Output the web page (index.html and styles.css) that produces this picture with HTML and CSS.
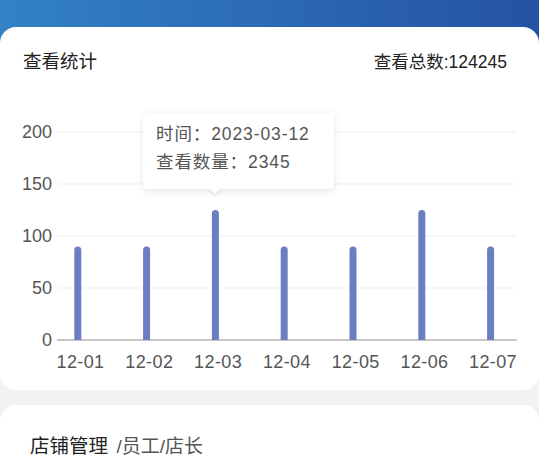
FILE: index.html
```html
<!DOCTYPE html>
<html lang="zh-CN">
<head>
  <meta charset="UTF-8">
  <title>查看统计</title>
  <meta name="viewport" content="width=device-width, initial-scale=1.0">
  <link rel="stylesheet" href="styles.css">
</head>
<body>

  <div class="page">

    <!-- 查看统计 -->
    <section class="card stats-card">
      <div class="card-head">
        <h2 class="card-title">查看统计</h2>
        <div class="total">查看总数:124245</div>
      </div>

      <svg class="chart" width="539" height="317" viewBox="0 0 539 317">
        <g class="grid">
          <line x1="58" y1="59" x2="517" y2="59"></line>
          <line x1="58" y1="111" x2="517" y2="111"></line>
          <line x1="58" y1="163" x2="517" y2="163"></line>
          <line x1="58" y1="215" x2="517" y2="215"></line>
        </g>
        <line class="axis" x1="57" y1="267" x2="517" y2="267"></line>

        <g class="y-labels">
          <text x="52" y="59" dy="0.36em">200</text>
          <text x="52" y="111" dy="0.36em">150</text>
          <text x="52" y="163" dy="0.36em">100</text>
          <text x="52" y="215" dy="0.36em">50</text>
          <text x="52" y="267" dy="0.36em">0</text>
        </g>

        <g class="bars">
          <path d="M74.3 267 V176.9 A3.5 3.5 0 0 1 81.3 176.9 V267 Z"></path>
          <path d="M143.1 267 V176.9 A3.5 3.5 0 0 1 150.1 176.9 V267 Z"></path>
          <path d="M211.9 267 V140.5 A3.5 3.5 0 0 1 218.9 140.5 V267 Z"></path>
          <path d="M280.7 267 V176.9 A3.5 3.5 0 0 1 287.7 176.9 V267 Z"></path>
          <path d="M349.5 267 V176.9 A3.5 3.5 0 0 1 356.5 176.9 V267 Z"></path>
          <path d="M418.3 267 V140.5 A3.5 3.5 0 0 1 425.3 140.5 V267 Z"></path>
          <path d="M487.1 267 V176.9 A3.5 3.5 0 0 1 494.1 176.9 V267 Z"></path>
        </g>

        <g class="x-labels">
          <text x="80.5" y="289" dy="0.36em">12-01</text>
          <text x="149.3" y="289" dy="0.36em">12-02</text>
          <text x="218.1" y="289" dy="0.36em">12-03</text>
          <text x="286.9" y="289" dy="0.36em">12-04</text>
          <text x="355.7" y="289" dy="0.36em">12-05</text>
          <text x="424.5" y="289" dy="0.36em">12-06</text>
          <text x="493" y="289" dy="0.36em">12-07</text>
        </g>
      </svg>

      <!-- tooltip over the 12-03 bar -->
      <div class="tooltip">
        <p>时间：2023-03-12</p>
        <p>查看数量：2345</p>
      </div>
    </section>

    <!-- 店铺管理 -->
    <section class="card shop-card">
      <h2 class="shop-title">店铺管理 <span>/员工/店长</span></h2>
    </section>

  </div>

</body>
</html>
```

FILE: styles.css
```css
* {
  box-sizing: border-box;
  margin: 0;
  padding: 0;
}

body {
  font-family: "Liberation Sans", "Noto Sans CJK SC", sans-serif;
  background: #f2f2f2;
  color: #222;
}

.page {
  background: linear-gradient(90deg, #3282c5, #2552a4) no-repeat;
  background-size: 100% 60px;
  padding-top: 27px;
}

.card {
  background: #fff;
  border-radius: 16px;
}

.stats-card {
  position: relative;
  height: 363px;
}

.card-head {
  display: flex;
  justify-content: space-between;
  align-items: center;
  padding: 24px 32px 0 23px;
  height: 46px;
}

.card-title {
  font-size: 18.5px;
  font-weight: normal;
  line-height: 22px;
  color: #222;
}

.total {
  font-size: 17.5px;
  line-height: 22px;
  color: #222;
}

.chart {
  display: block;
}

.grid line {
  stroke: #efefef;
  stroke-width: 1;
}

.axis {
  stroke: #8e8e8e;
  stroke-width: 1;
}

.y-labels text {
  font-size: 18px;
  fill: #555;
  text-anchor: end;
}

.x-labels text {
  font-size: 18px;
  letter-spacing: 0.4px;
  fill: #555;
  text-anchor: middle;
}

.bars path {
  fill: #6a7ec1;
}

.tooltip {
  position: absolute;
  left: 143px;
  top: 86px;
  width: 191px;
  height: 76px;
  padding: 7px 13px 13px;
  background: #fff;
  border-radius: 4px;
  box-shadow: 0 2px 8px rgba(0, 0, 0, 0.1);
  font-size: 17.5px;
  line-height: 28px;
  letter-spacing: 0.9px;
  color: #555;
  white-space: nowrap;
}

.tooltip::after {
  content: "";
  position: absolute;
  left: 67px;
  top: 69px;
  width: 10px;
  height: 10px;
  background: #fff;
  transform: rotate(45deg);
  box-shadow: 2px 2px 3px rgba(0, 0, 0, 0.06);
}

.shop-card {
  margin-top: 15px;
  border-radius: 16px 16px 0 0;
  padding: 28px 30px 20px;
  min-height: 64px;
}

.shop-title {
  font-size: 19.5px;
  font-weight: normal;
  line-height: 26px;
  color: #222;
}

.shop-title span {
  margin-left: 3px;
  font-size: 19px;
  color: #555;
}
```
